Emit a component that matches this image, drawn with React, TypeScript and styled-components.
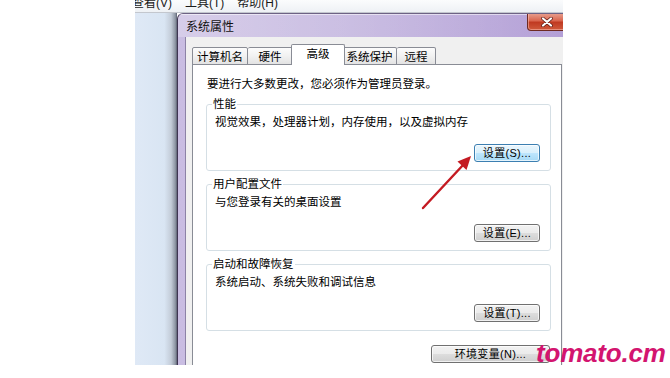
import styled, { createGlobalStyle } from "styled-components";

const GlobalStyle = createGlobalStyle`
  html, body {
    margin: 0;
    padding: 0;
    background: #ffffff;
  }
  body {
    font-family: "Liberation Sans", "Noto Sans CJK SC", sans-serif;
    color: #000000;
  }
`;

const Page = styled.div`
  position: relative;
  width: 670px;
  height: 378px;
  overflow: hidden;
  background: #ffffff;
`;

const Desktop = styled.div`
  margin-left: 135px;
  width: 428px;
  height: 365px;
  display: flex;
  flex-direction: column;
  overflow: hidden;
`;

const MenuBar = styled.div`
  height: 12px;
  flex: 0 0 12px;
  display: flex;
  gap: 13px;
  overflow: hidden;
  background: linear-gradient(#fbfcfd, #eef1f5);
  border-bottom: 1px solid #c3c7ce;
`;

const MenuItem = styled.span`
  font-size: 12px;
  line-height: 14px;
  margin-top: -4px;
  color: #1a1a1a;
  white-space: nowrap;
  &:first-child {
    margin-left: -3px;
  }
`;

const Workspace = styled.div`
  flex: 1;
  display: flex;
  min-height: 0;
`;

const SidePane = styled.div`
  width: 42px;
  flex: 0 0 42px;
  background: linear-gradient(
    to right,
    #dfe9f6 0%,
    #d9e5f3 70%,
    #c3ccd8 86%,
    #8e96a4 96%,
    #5a6070 100%
  );
`;

const Window = styled.div`
  flex: 1;
  display: flex;
  flex-direction: column;
  overflow: hidden;
  border-left: 1px solid #3f3552;
  border-top: 1px solid #6d6284;
  border-radius: 6px 0 0 0;
  background: linear-gradient(to right, #c9bde2 0%, #c2b4de 45%, #b4a0d7 100%);
`;

const TitleBar = styled.div`
  height: 23px;
  flex: 0 0 23px;
  display: flex;
  justify-content: space-between;
  align-items: flex-start;
  padding-left: 8px;
  background: linear-gradient(to right, rgba(255, 255, 255, 0.25), rgba(255, 255, 255, 0));
  box-shadow: inset 0 1px 0 rgba(255, 255, 255, 0.55);
`;

const Title = styled.span`
  font-size: 12px;
  line-height: 14px;
  margin-top: 6px;
  color: #111111;
`;

const CloseButton = styled.div`
  width: 38px;
  height: 17px;
  margin-right: -4px;
  margin-top: -1px;
  display: flex;
  align-items: center;
  justify-content: center;
  border: 1px solid #6e2a22;
  border-top: none;
  border-radius: 0 0 4px 4px;
  background: linear-gradient(#e9a393 0%, #d9664f 45%, #c03a22 55%, #cf5a3c 100%);
  box-shadow: inset 0 0 0 1px rgba(255, 200, 190, 0.5);
`;

const Frame = styled.div`
  flex: 1;
  display: flex;
  padding-left: 7px;
  min-height: 0;
`;

const WindowBody = styled.div`
  flex: 1;
  display: flex;
  flex-direction: column;
  background: #f0f0f0;
  border-left: 1px solid #8c83a6;
  padding: 8px 1px 0 6px;
`;

const TabStrip = styled.div`
  display: flex;
  align-items: flex-end;
  height: 20px;
  margin-bottom: -1px;
  position: relative;
  z-index: 1;
`;

const Tab = styled.div<{ $w: number; $active?: boolean }>`
  width: ${(p) => p.$w}px;
  height: ${(p) => (p.$active ? 21 : 18)}px;
  box-sizing: border-box;
  margin: ${(p) => (p.$active ? "0 -2px" : "0")};
  position: relative;
  z-index: ${(p) => (p.$active ? 2 : 1)};
  border: 1px solid #898c95;
  border-bottom: ${(p) => (p.$active ? "none" : "1px solid #898c95")};
  border-left-width: ${(p) => (p.$active ? 1 : 0)}px;
  border-radius: 2px 2px 0 0;
  background: ${(p) =>
    p.$active ? "#ffffff" : "linear-gradient(#fcfcfc 0%, #f1f1f1 50%, #e3e3e3 100%)"};
  font-size: 11.5px;
  line-height: 16px;
  padding-top: 1px;
  text-align: center;
  white-space: nowrap;
  &:first-child {
    border-left-width: 1px;
  }
`;

const TabPanel = styled.div`
  flex: 1;
  background: #ffffff;
  border: 1px solid #898c95;
  border-bottom: none;
  padding: 12px 10px 0 13px;
  display: flex;
  flex-direction: column;
`;

const Intro = styled.div`
  font-size: 11.5px;
  line-height: 14px;
  margin-left: 1px;
`;

const Group = styled.fieldset`
  margin: 6px 0 0 0;
  padding: 4px 10px 8px 8px;
  border: 1px solid #d5dfe5;
  border-radius: 3px;
  display: flex;
  flex-direction: column;
  min-width: 0;
`;

const Legend = styled.legend`
  font-size: 11.5px;
  line-height: 14px;
  padding: 0 1px;
  margin-left: -3px;
`;

const Description = styled.div`
  font-size: 11.5px;
  line-height: 14px;
`;

const ButtonRow = styled.div`
  display: flex;
  justify-content: flex-end;
  margin-top: 15px;
`;

const BottomRow = styled.div`
  display: flex;
  justify-content: flex-end;
  margin-top: 14px;
  padding-right: 1px;
`;

const Button = styled.div<{ $w: number; $focus?: boolean }>`
  width: ${(p) => p.$w}px;
  height: 18px;
  box-sizing: border-box;
  border: 1px solid ${(p) => (p.$focus ? "#3c7fb1" : "#707070")};
  border-radius: 3px;
  background: ${(p) =>
    p.$focus
      ? "linear-gradient(#eaf6fd 0%, #d9f0fc 50%, #bee6fd 51%, #a7d9f5 100%)"
      : "linear-gradient(#f2f2f2 0%, #ebebeb 50%, #dddddd 51%, #cfcfcf 100%)"};
  box-shadow: inset 0 0 0 1px rgba(255, 255, 255, 0.7);
  font-size: 11px;
  line-height: 16px;
  text-align: center;
  white-space: nowrap;
  letter-spacing: 0.3px;
`;

const Arrow = styled.svg`
  position: absolute;
  left: 0;
  top: 0;
  pointer-events: none;
`;

const Watermark = styled.div`
  position: absolute;
  left: 536px;
  top: 340px;
  font-family: "Liberation Sans", Arial, sans-serif;
  font-size: 26px;
  line-height: 26px;
  font-weight: 700;
  font-style: italic;
  color: #d3156f;
  letter-spacing: -0.2px;
`;

const tabs = [
  { label: "计算机名", w: 56 },
  { label: "硬件", w: 45 },
  { label: "高级", w: 54, active: true },
  { label: "系统保护", w: 54 },
  { label: "远程", w: 39 },
];

const groups = [
  { title: "性能", text: "视觉效果，处理器计划，内存使用，以及虚拟内存", key: "S", focus: true },
  { title: "用户配置文件", text: "与您登录有关的桌面设置", key: "E" },
  { title: "启动和故障恢复", text: "系统启动、系统失败和调试信息", key: "T" },
];

function App() {
  return (
    <Page>
      <GlobalStyle />
      <Desktop>
        <MenuBar>
          <MenuItem>查看(V)</MenuItem>
          <MenuItem>工具(T)</MenuItem>
          <MenuItem>帮助(H)</MenuItem>
        </MenuBar>
        <Workspace>
          <SidePane />
          <Window>
            <TitleBar>
              <Title>系统属性</Title>
              <CloseButton>
                <svg width="12" height="10" viewBox="0 0 12 10">
                  <path d="M2 1.5 L10 8.5 M10 1.5 L2 8.5" stroke="#5a1a14" strokeWidth="3.6" strokeLinecap="round" />
                  <path d="M2 1.5 L10 8.5 M10 1.5 L2 8.5" stroke="#ffffff" strokeWidth="2.2" strokeLinecap="round" />
                </svg>
              </CloseButton>
            </TitleBar>
            <Frame>
              <WindowBody>
                <TabStrip>
                  {tabs.map((t) => (
                    <Tab key={t.label} $w={t.w} $active={t.active}>
                      {t.label}
                    </Tab>
                  ))}
                </TabStrip>
                <TabPanel>
                  <Intro>要进行大多数更改，您必须作为管理员登录。</Intro>
                  {groups.map((g) => (
                    <Group key={g.title}>
                      <Legend>{g.title}</Legend>
                      <Description>{g.text}</Description>
                      <ButtonRow>
                        <Button $w={66} $focus={g.focus}>
                          设置({g.key})...
                        </Button>
                      </ButtonRow>
                    </Group>
                  ))}
                  <BottomRow>
                    <Button $w={119}>环境变量(N)...</Button>
                  </BottomRow>
                </TabPanel>
              </WindowBody>
            </Frame>
          </Window>
        </Workspace>
      </Desktop>
      <Arrow width="670" height="378" viewBox="0 0 670 378">
        <line x1="423" y1="208" x2="464" y2="164" stroke="#c41a22" strokeWidth="2.4" strokeLinecap="round" />
        <polygon points="471,156 466.5,170 457.5,161.5" fill="#c41a22" />
      </Arrow>
      <Watermark>tomato.cm</Watermark>
    </Page>
  );
}

export default App;
